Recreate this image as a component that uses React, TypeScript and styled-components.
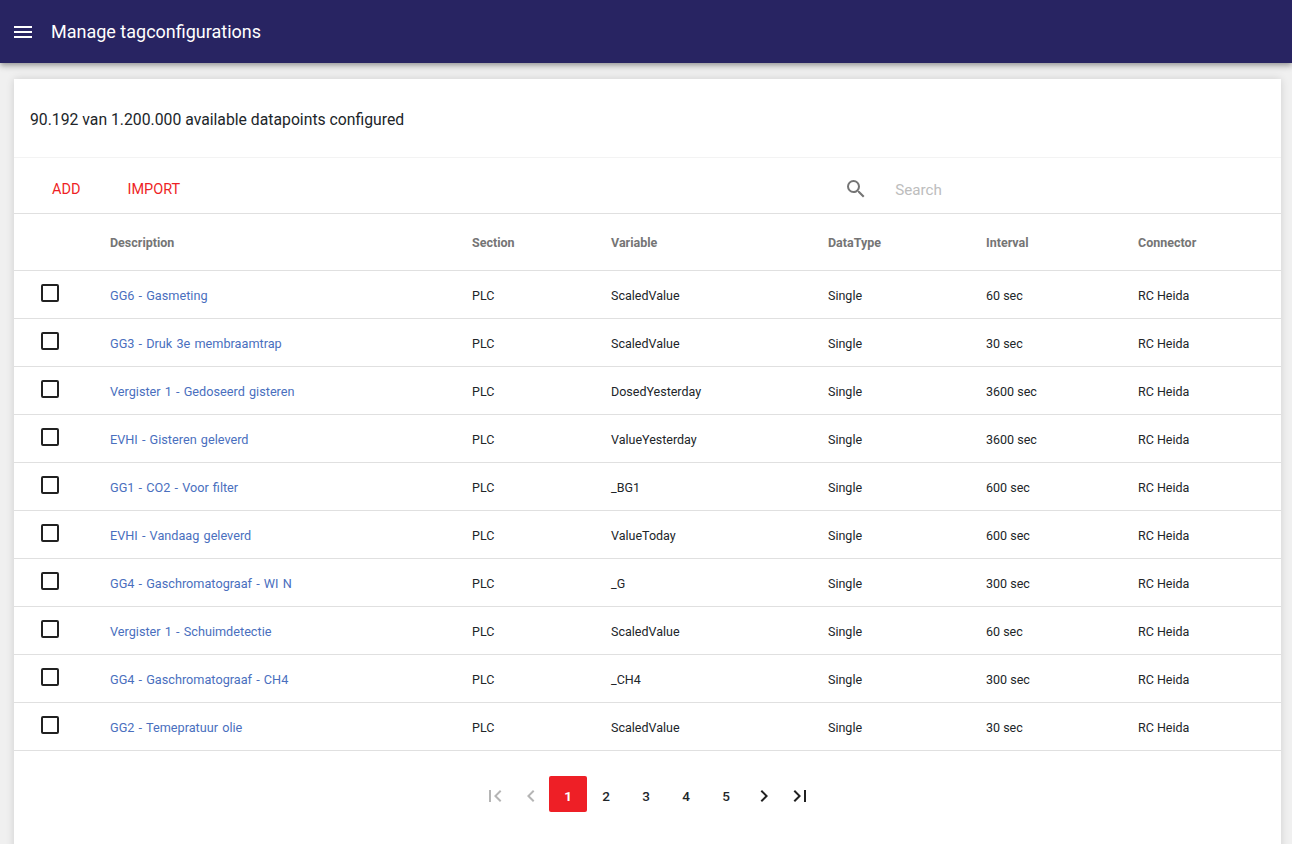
import styled, { createGlobalStyle } from "styled-components";

const rows = [
  { description: "GG6 - Gasmeting", variable: "ScaledValue", interval: "60 sec" },
  { description: "GG3 - Druk 3e membraamtrap", variable: "ScaledValue", interval: "30 sec" },
  { description: "Vergister 1 - Gedoseerd gisteren", variable: "DosedYesterday", interval: "3600 sec" },
  { description: "EVHI - Gisteren geleverd", variable: "ValueYesterday", interval: "3600 sec" },
  { description: "GG1 - CO2 - Voor filter", variable: "_BG1", interval: "600 sec" },
  { description: "EVHI - Vandaag geleverd", variable: "ValueToday", interval: "600 sec" },
  { description: "GG4 - Gaschromatograaf - WI N", variable: "_G", interval: "300 sec" },
  { description: "Vergister 1 - Schuimdetectie", variable: "ScaledValue", interval: "60 sec" },
  { description: "GG4 - Gaschromatograaf - CH4", variable: "_CH4", interval: "300 sec" },
  { description: "GG2 - Temepratuur olie", variable: "ScaledValue", interval: "30 sec" },
];

const GlobalStyle = createGlobalStyle`
  html, body {
    margin: 0;
    height: 100%;
    overflow: hidden;
    background: #f0f0f0;
    font-family: Roboto, sans-serif;
  }
`;

const Page = styled.div`
  height: 844px;
  overflow: hidden;
  display: flex;
  flex-direction: column;
`;

const AppBar = styled.header`
  height: 63px;
  flex: none;
  display: flex;
  align-items: center;
  gap: 19px;
  padding: 0 14px;
  background: #282462;
  color: #fff;
  box-shadow: 0 2px 4px -1px rgba(0, 0, 0, 0.2), 0 4px 5px 0 rgba(0, 0, 0, 0.14), 0 1px 10px 0 rgba(0, 0, 0, 0.12);
  position: relative;
  z-index: 1;
`;

const Title = styled.h1`
  margin: 0;
  font-size: 18px;
  font-weight: 400;
  line-height: 1;
`;

const Content = styled.main`
  margin: 16px 11px 0 14px;
  display: flex;
  flex-direction: column;
  gap: 1px;
  background: #f3f3f3;
  border-radius: 2px;
  box-shadow: 0 0 8px rgba(0, 0, 0, 0.14);
`;

const Card = styled.section`
  background: #fff;
`;

const Summary = styled(Card)`
  box-sizing: border-box;
  height: 78px;
  display: flex;
  align-items: center;
  padding: 3px 0 0 16px;
  font-size: 15.75px;
  color: #212529;
`;

const Toolbar = styled.div`
  box-sizing: border-box;
  height: 56px;
  display: flex;
  align-items: center;
  padding: 6px 0 0 38px;
  border-bottom: 1px solid #e0e0e0;
`;

const ActionButton = styled.button`
  border: 0;
  padding: 2px 0 0;
  background: none;
  color: #ee1f26;
  font: 400 14.5px Roboto, sans-serif;
  text-transform: uppercase;
  margin-right: 47px;
`;

const SearchBox = styled.div`
  display: flex;
  align-items: center;
  gap: 27px;
  margin-left: 617px;
  color: #757575;
`;

const SearchInput = styled.input`
  border: 0;
  outline: 0;
  width: 300px;
  padding: 2px 0 0;
  font: 400 15.2px Roboto, sans-serif;
  &::placeholder {
    color: #bdbdbd;
    opacity: 1;
  }
`;

const Row = styled.div<{ $head?: boolean }>`
  box-sizing: border-box;
  display: grid;
  grid-template-columns: 96px 362px 139px 217px 158px 152px 1fr;
  align-items: center;
  height: ${(p) => (p.$head ? 57 : 48)}px;
  padding-top: ${(p) => (p.$head ? 0 : 2)}px;
  border-bottom: 1px solid #e0e0e0;
  font-size: 12.5px;
  font-weight: ${(p) => (p.$head ? 700 : 400)};
  color: ${(p) => (p.$head ? "#757575" : "#212529")};
`;

const CheckCell = styled.div`
  display: flex;
  padding: 0 0 5px 27px;
`;

const CheckBox = styled.input.attrs({ type: "checkbox" })`
  appearance: none;
  width: 18px;
  height: 18px;
  margin: 0;
  border: 2px solid #212121;
  border-radius: 2px;
  background: #fff;
`;

const DescLink = styled.a`
  color: #4a6fbe;
  font-size: 12.7px;
  word-spacing: 1px;
  text-decoration: none;
`;

const Pager = styled.nav`
  display: flex;
  justify-content: center;
  align-items: center;
  padding: 25px 0 64px;
`;

const PageButton = styled.button<{ $active?: boolean }>`
  width: 38px;
  height: 36px;
  margin: ${(p) => (p.$active ? "0 -1px 0 0" : "0 1px")};
  border: 0;
  padding: 3px 0 0;
  border-radius: 2px;
  background: ${(p) => (p.$active ? "#ee1f26" : "transparent")};
  color: ${(p) => (p.$active ? "#fff" : "#212529")};
  font: ${(p) => (p.$active ? 700 : 500)} 13.5px Roboto, sans-serif;
`;

const ArrowButton = styled.button<{ $off?: boolean }>`
  width: 36px;
  height: 36px;
  border: 0;
  padding: 3px 0 0;
  background: none;
  display: flex;
  align-items: center;
  justify-content: center;
  color: ${(p) => (p.$off ? "#b5b5b5" : "#212121")};
`;

const MenuIcon = () => (
  <svg width="18" height="12" viewBox="0 0 18 12" fill="#fff">
    <path d="M0 12h18v-2H0v2zm0-5h18V5H0v2zm0-7v2h18V0H0z" />
  </svg>
);

const SearchIcon = () => (
  <svg width="24" height="24" viewBox="0 0 24 24" fill="currentColor">
    <path d="M15.5 14h-.79l-.28-.27A6.47 6.47 0 0 0 16 9.5 6.5 6.5 0 1 0 9.5 16c1.61 0 3.09-.59 4.23-1.57l.27.28v.79l5 4.99L20.49 19l-4.99-5zm-6 0C7.01 14 5 11.99 5 9.5S7.01 5 9.5 5 14 7.01 14 9.5 11.99 14 9.5 14z" />
  </svg>
);

const Arrow = ({ d }: { d: string }) => (
  <svg width="24" height="24" viewBox="0 0 24 24" fill="currentColor">
    <path d={d} />
  </svg>
);

const firstPage = "M18.41 16.59L13.82 12l4.59-4.59L17 6l-6 6 6 6zM6 6h2v12H6z";
const prevPage = "M15.41 7.41L14 6l-6 6 6 6 1.41-1.41L10.83 12z";
const nextPage = "M10 6L8.59 7.41 13.17 12l-4.58 4.59L10 18l6-6z";
const lastPage = "M5.59 7.41L10.18 12l-4.59 4.59L7 18l6-6-6-6zM16 6h2v12h-2z";

export default function App() {
  return (
    <Page>
      <GlobalStyle />
      <AppBar>
        <MenuIcon />
        <Title>Manage tagconfigurations</Title>
      </AppBar>
      <Content>
        <Summary>90.192 van 1.200.000 available datapoints configured</Summary>
        <Card>
          <Toolbar>
            <ActionButton>Add</ActionButton>
            <ActionButton>Import</ActionButton>
            <SearchBox>
              <SearchIcon />
              <SearchInput placeholder="Search" />
            </SearchBox>
          </Toolbar>
          <Row $head>
            <span />
            <span>Description</span>
            <span>Section</span>
            <span>Variable</span>
            <span>DataType</span>
            <span>Interval</span>
            <span>Connector</span>
          </Row>
          {rows.map((row) => (
            <Row key={row.description}>
              <CheckCell>
                <CheckBox />
              </CheckCell>
              <DescLink href="#">{row.description}</DescLink>
              <span>PLC</span>
              <span>{row.variable}</span>
              <span>Single</span>
              <span>{row.interval}</span>
              <span>RC Heida</span>
            </Row>
          ))}
          <Pager>
            <ArrowButton $off>
              <Arrow d={firstPage} />
            </ArrowButton>
            <ArrowButton $off>
              <Arrow d={prevPage} />
            </ArrowButton>
            {[1, 2, 3, 4, 5].map((n) => (
              <PageButton key={n} $active={n === 1}>
                {n}
              </PageButton>
            ))}
            <ArrowButton>
              <Arrow d={nextPage} />
            </ArrowButton>
            <ArrowButton>
              <Arrow d={lastPage} />
            </ArrowButton>
          </Pager>
        </Card>
      </Content>
    </Page>
  );
}
